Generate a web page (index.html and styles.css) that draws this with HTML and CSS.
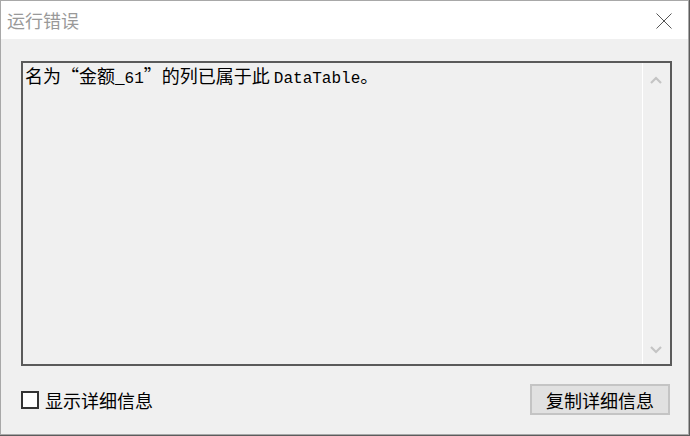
FILE: index.html
```html
<!doctype html>
<html lang="zh-CN">
<head>
    <meta charset="UTF-8">
    <title>运行错误</title>
    <link rel="stylesheet" href="styles.css">
</head>
<body>
    <div class="window">
        <div class="titlebar">
            <span class="title">运行错误</span>
            <svg class="close" width="16" height="16" viewBox="0 0 16 16">
                <path d="M0.5 0.5 L15.5 15.5 M15.5 0.5 L0.5 15.5" stroke="#555" stroke-width="1" fill="none"/>
            </svg>
        </div>
        <div class="content">
            <div class="msgbox">
                <div class="msgtext">名为“金额<span class="mono">_61</span>”的列已属于此 <span class="mono">DataTable</span>。</div>
                <div class="scrollbar">
                    <svg width="12" height="8" viewBox="0 0 12 8">
                        <path d="M1 7 L6 2 L11 7" stroke="#c4c4c4" stroke-width="2.2" fill="none"/>
                    </svg>
                    <svg width="12" height="8" viewBox="0 0 12 8">
                        <path d="M1 1 L6 6 L11 1" stroke="#c4c4c4" stroke-width="2.2" fill="none"/>
                    </svg>
                </div>
            </div>
            <div class="footer">
                <label class="check">
                    <span class="box"></span>
                    <span>显示详细信息</span>
                </label>
                <button class="btn">复制详细信息</button>
            </div>
        </div>
    </div>
</body>
</html>
```

FILE: styles.css
```css
body{
    margin: 0;
    padding: 0;
    background: #5c5c5c;
    font-family: "Noto Sans CJK SC", "Microsoft YaHei", sans-serif;
}
.window{
    width: 687px;
    height: 433px;
    border: 1px solid #a8a8a8;
    display: flex;
    flex-direction: column;
    background: #f0f0f0;
}
.titlebar{
    height: 38px;
    background: #fff;
    display: flex;
    align-items: center;
    justify-content: space-between;
    padding: 0 16px 0 6px;
}
.title{
    font-size: 18px;
    color: #999;
    line-height: 20px;
}
.close{
    margin-top: 2px;
}
.content{
    flex: 1;
    display: flex;
    flex-direction: column;
    padding: 22px 16px 0 20px;
}
.msgbox{
    height: 301px;
    border: 2px solid #5a5a5a;
    display: flex;
}
.msgtext{
    flex: 1;
    font-size: 18px;
    line-height: 22px;
    padding: 1px 2px;
    color: #000;
}
.mono{
    font-family: "Liberation Mono", monospace;
    font-size: 16px;
}
.scrollbar{
    width: 25px;
    border-left: 1px solid #fff;
    display: flex;
    flex-direction: column;
    justify-content: space-between;
    align-items: center;
    padding: 13px 2px 10px 0;
}
.footer{
    display: flex;
    justify-content: space-between;
    align-items: center;
    margin-top: 18px;
}
.check{
    display: flex;
    align-items: center;
    gap: 6px;
    font-size: 18px;
}
.box{
    width: 14px;
    height: 14px;
    border: 2px solid #333;
    background: #fff;
}
.btn{
    width: 140px;
    height: 31px;
    margin-right: 2px;
    background: #e1e1e1;
    border: 2px solid #c4c4c4;
    font-family: inherit;
    font-size: 18px;
    line-height: 20px;
    color: #000;
    padding: 0;
}
```
